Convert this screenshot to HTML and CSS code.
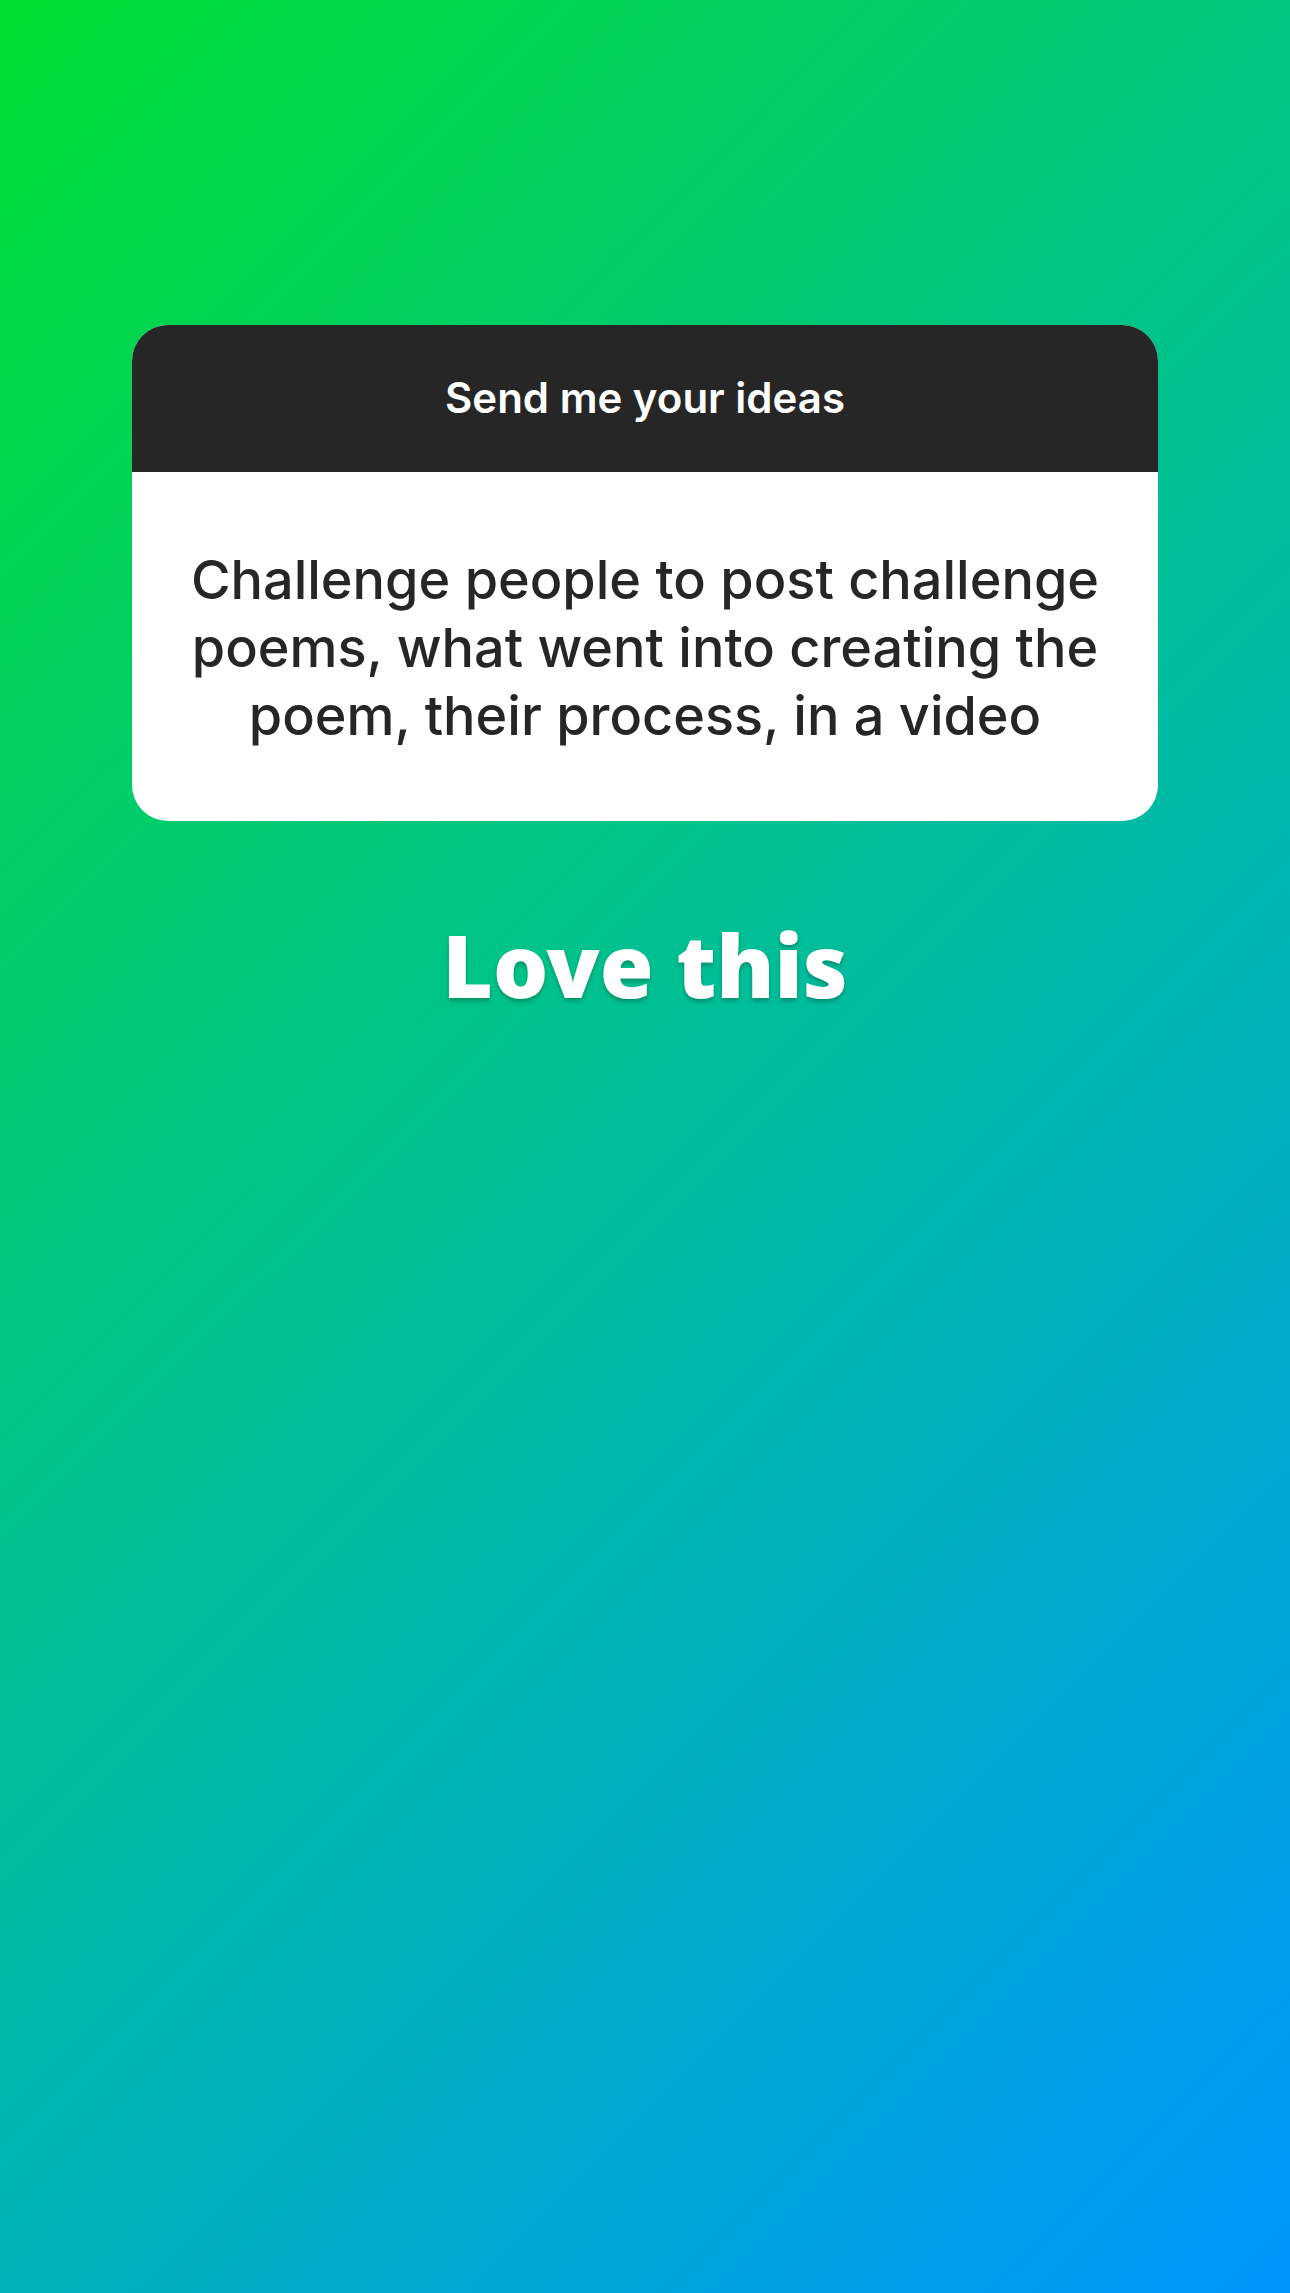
FILE: index.html
```html
<!DOCTYPE html>
<html lang="en">
<head>
  <meta charset="UTF-8" />
  <meta name="viewport" content="width=device-width, initial-scale=1.0"/>
  <title>Send me your ideas</title>
  <link rel="stylesheet" href="styles.css">
</head>
<body>
  <main class="story">
    <section class="question-card">
      <h1 class="prompt">Send me your ideas</h1>
      <p class="response">Challenge people to post challenge poems, what went into creating the poem, their process, in a video</p>
    </section>
    <p class="reply">Love this</p>
  </main>
</body>
</html>
```

FILE: styles.css
```css
* {
  box-sizing: border-box;
}

body {
  margin: 0;
  font-family: Inter, "Liberation Sans", sans-serif;
}

.story {
  min-height: 100vh;
  padding: 325px 132px 0;
  background: linear-gradient(135deg, #00df32 0%, #00b4b9 64%, #0096ff 100%);
}

.question-card {
  border-radius: 36px;
  overflow: hidden;
  background-color: #fff;
  text-align: center;
}

.prompt {
  margin: 0;
  padding: 47px 40px 49px;
  background-color: #262626;
  color: #fff;
  font-size: 42px;
  font-weight: 600;
  line-height: 51px;
}

.response {
  margin: 0;
  padding: 74px 48px 71px;
  color: #262626;
  font-size: 54px;
  font-weight: 500;
  line-height: 68px;
}

.reply {
  margin: 87px 0 0;
  color: #fff;
  font-family: "Noto Sans", "Open Sans", sans-serif;
  font-size: 87px;
  font-weight: 900;
  line-height: 112px;
  text-align: center;
  text-shadow: 0 3px 4px rgba(0, 0, 0, 0.25);
}
```
